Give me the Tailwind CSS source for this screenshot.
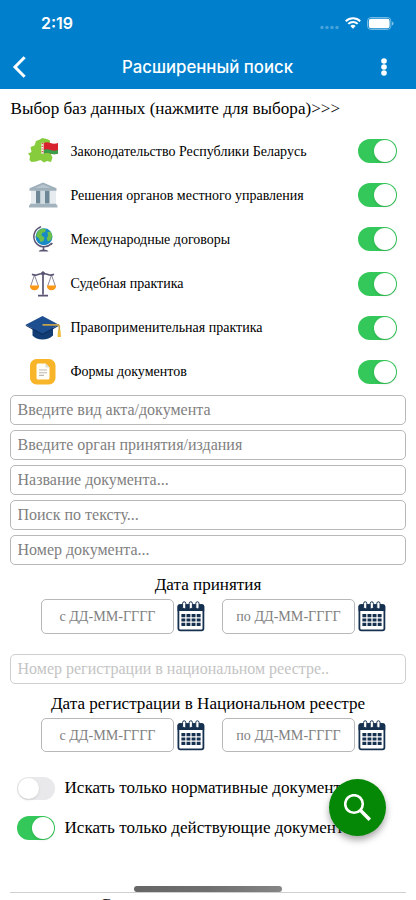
<!DOCTYPE html>
<html lang="ru">
<head>
  <meta charset="UTF-8" />
  <meta name="viewport" content="width=device-width, initial-scale=1.0" />
  <title>Расширенный поиск</title>
  <script src="https://cdn.jsdelivr.net/npm/@tailwindcss/browser@4"></script>
</head>
<body class="bg-white">
  <!-- Общие иконки -->
  <svg class="hidden">
    <symbol id="calendar" viewBox="0 0 28 31">
      <rect x="1.4" y="4.2" width="25" height="25.2" rx="1.8" fill="#fff" stroke="#16304f" stroke-width="1.8" />
      <path d="M.5 10V5.5Q.5 3.3 2.7 3.3H25Q27.2 3.3 27.2 5.5V10z" fill="#16304f" />
      <g fill="#fff" stroke="#16304f" stroke-width="1">
        <rect x="5.6" y=".8" width="3.2" height="7" rx="1.6" />
        <rect x="12.2" y=".8" width="3.2" height="7" rx="1.6" />
        <rect x="18.8" y=".8" width="3.2" height="7" rx="1.6" />
      </g>
      <path d="M4.4 14.6h19.2M4.4 19h19.2M4.4 23.4h19.2" stroke="#16304f" stroke-width="3.2" stroke-dasharray="3.9 1.2" />
    </symbol>
  </svg>

  <div class="relative w-[416px] h-[900px] overflow-hidden flex flex-col bg-white text-black font-['Liberation_Serif',serif]">

    <!-- Шапка -->
    <header class="h-[89px] shrink-0 bg-[#0080cc] text-white font-[Inter,sans-serif]">
      <div class="h-[46px] pl-[41px] pr-[22px] flex items-center justify-between">
        <span class="text-[16px] font-semibold leading-none">2:19</span>
        <div class="flex items-center">
          <svg class="w-[19px] h-[5px] mt-[8px]" viewBox="0 0 19 5" fill="#fff" fill-opacity=".28">
            <circle cx="2" cy="2.5" r="1.7" /><circle cx="7" cy="2.5" r="1.7" /><circle cx="12" cy="2.5" r="1.7" /><circle cx="17" cy="2.5" r="1.7" />
          </svg>
          <svg class="w-[16px] h-[12px] ml-[6px]" viewBox="0 0 16 12" fill="none" stroke="#fff" stroke-width="2">
            <path d="M.8 4.2a10.3 10.3 0 0 1 14.4 0M3.3 6.9a6.7 6.7 0 0 1 9.4 0" />
            <path d="M8 11.7 5.4 9.1a3.7 3.7 0 0 1 5.2 0z" fill="#fff" stroke="none" />
          </svg>
          <svg class="w-[27px] h-[13px] ml-[6px]" viewBox="0 0 27 13">
            <rect x=".5" y=".5" width="23.4" height="12" rx="3.6" fill="none" stroke="#fff" stroke-opacity=".45" />
            <rect x="1.8" y="1.8" width="20.8" height="9.4" rx="2.3" fill="#fff" />
            <path d="M25 4.5q1.6.6 1.6 2t-1.6 2z" fill="#fff" fill-opacity=".5" />
          </svg>
        </div>
      </div>
      <div class="h-[41px] pl-[12px] pr-[28px] flex items-center justify-between">
        <svg class="w-[14px] h-[22px]" viewBox="0 0 14 22" fill="none" stroke="#fff" stroke-width="3">
          <path d="M12.6 1.2 3 11l9.6 9.8" />
        </svg>
        <h1 class="ml-[9px] mt-px text-[16.8px] font-medium leading-none whitespace-nowrap">Расширенный поиск</h1>
        <svg class="w-[8px] h-[18px]" viewBox="0 0 8 18" fill="#fff">
          <circle cx="4" cy="3" r="2.8" /><circle cx="4" cy="9" r="2.8" /><circle cx="4" cy="15" r="2.8" />
        </svg>
      </div>
    </header>

    <h2 class="h-[40px] shrink-0 pl-[10.5px] flex items-center text-[17.1px] whitespace-nowrap">Выбор баз данных (нажмите для выбора)&gt;&gt;&gt;</h2>

    <!-- Базы данных -->
    <ul class="h-[265px] shrink-0 pl-[25px] pr-[19px] grid grid-rows-6 text-[14px]">
      <li class="flex items-center">
        <svg class="w-[36px] h-[30px]" viewBox="0 0 36 30">
          <path d="M3 17.5 6.5 16 5.5 11l4-1.5L11 5l4-1.5L17 2l5 1 3 1.5v4l3.5 4.500L28 16l-2 2.500 1.500 3L26 26l-4-1-3 1.500L15.500 24 11 25.500 6.500 26l-2-2 .5-4z" fill="#86cc3d" />
          <path d="M18.500 7q3.500-1.500 7 0t7.500 0v10.500q-4 1.500-7.500 0t-7 0z" fill="#d8232f" />
          <path d="M18.500 14q3.500-1.500 7 0t7.500 0v3.500q-4 1.500-7.500 0t-7 0z" fill="#36a04a" />
          <path d="M17.500 6.800v11" stroke="#fff" stroke-width="2.200" />
          <path d="M17.500 7v11" stroke="#e0503f" stroke-width="1.600" stroke-dasharray="1.200 1.500" />
        </svg>
        <span class="ml-[9.5px] whitespace-nowrap">Законодательство Республики Беларусь</span>
        <span class="ml-auto w-[39px] h-[24px] rounded-full bg-[#34c759] flex items-center justify-end pr-[1px]"><span class="size-[22px] rounded-full bg-white shadow"></span></span>
      </li>
      <li class="flex items-center">
        <svg class="w-[36px] h-[30px]" viewBox="0 0 36 30">
          <rect x="6" y="10" width="25" height="14.500" fill="#e5ebef" />
          <path d="M11 10.500h4.500v13H11zM20 10.500h4.500v13H20z" fill="#6d8796" />
          <path d="M15.500 10.500h4.500v13h-4.500z" fill="#d0dbe2" />
          <path d="M18 2.500 31.500 8.200v2.600h-27V8.200z" fill="#9fb0bb" />
          <path d="M18 4.500 26 8H10z" fill="#b8c5ce" />
          <path d="M5 23.800h26.500v1.400h1v2.300H4v-2.300h1z" fill="#a3b3be" />
        </svg>
        <span class="ml-[9.5px] whitespace-nowrap">Решения органов местного управления</span>
        <span class="ml-auto w-[39px] h-[24px] rounded-full bg-[#34c759] flex items-center justify-end pr-[1px]"><span class="size-[22px] rounded-full bg-white shadow"></span></span>
      </li>
      <li class="flex items-center">
        <svg class="w-[36px] h-[30px]" viewBox="0 0 36 30">
          <circle cx="19" cy="12.700" r="8.500" fill="#1689c6" />
          <path d="M12 9q2-4 6-4.500l3 1-1 2.500-3 1-.5 2.500 3 2-1 3.500-3 1-1.500-3.500L11 12zM22.500 8l3-.5 1.800 4-1 4-3.300 2-1.300-3 1.300-2.500z" fill="#6cc04a" />
          <path d="M14.700 3.400A10.200 10.200 0 1 0 26.200 19.900" fill="none" stroke="#5b5573" stroke-width="1.500" />
          <path d="M13.800 3.900 16 2.600M25.600 20.700 27.400 19M18.500 23v3.500" stroke="#5b5573" stroke-width="1.600" />
          <path d="M13.500 27.500q1-2 5-2t5 2z" fill="#5b5573" />
        </svg>
        <span class="ml-[9.5px] whitespace-nowrap">Международные договоры</span>
        <span class="ml-auto w-[39px] h-[24px] rounded-full bg-[#34c759] flex items-center justify-end pr-[1px]"><span class="size-[22px] rounded-full bg-white shadow"></span></span>
      </li>
      <li class="flex items-center">
        <svg class="w-[36px] h-[30px]" viewBox="0 0 36 30" fill="none" stroke="#5b5573">
          <path d="M9.500 6 5.500 17.500M9.500 6l4 11.500M26.500 6l-4 11.500M26.500 6l4 11.500" stroke-width=".7" />
          <path d="M7 5.200q3 1.600 6 .3t5-.5q2-.8 5 .5t6-.3" stroke-width="1.600" />
          <path d="M18 3v22.500M13 26.600h10" stroke-width="1.700" />
          <circle cx="18" cy="4.300" r="1.500" fill="#5b5573" />
          <path d="M4.800 16.500h9.400q-.5 4.800-4.700 4.800T4.800 16.500zM21.800 16.500h9.400q-.5 4.800-4.700 4.800T21.800 16.500z" fill="#fb9817" stroke="none" />
        </svg>
        <span class="ml-[9.5px] whitespace-nowrap">Судебная практика</span>
        <span class="ml-auto w-[39px] h-[24px] rounded-full bg-[#34c759] flex items-center justify-end pr-[1px]"><span class="size-[22px] rounded-full bg-white shadow"></span></span>
      </li>
      <li class="flex items-center">
        <svg class="w-[36px] h-[30px]" viewBox="0 0 36 30">
          <path d="M7.500 13v9.500q3.500 4 10 4t10.500-4V13z" fill="#123c74" />
          <path d="M17.500 3 34 11.700 17.500 20.800.7 11.700z" fill="#1d4f90" />
          <path d="M.7 11.700 17.500 20.800 34 11.700v1L17.500 22.200.7 12.700z" fill="#0e3162" />
          <path d="M17.500 11.900h15.300q1.500 0 1.500 1.500V17" fill="none" stroke="#c5a14a" stroke-width="1.600" />
          <path d="M33 17h2.500l.5 7h-3.500z" fill="#edbd3d" />
        </svg>
        <span class="ml-[9.5px] whitespace-nowrap">Правоприменительная практика</span>
        <span class="ml-auto w-[39px] h-[24px] rounded-full bg-[#34c759] flex items-center justify-end pr-[1px]"><span class="size-[22px] rounded-full bg-white shadow"></span></span>
      </li>
      <li class="flex items-center">
        <svg class="w-[36px] h-[30px]" viewBox="0 0 36 30">
          <rect x="5" y="2" width="25.500" height="25.500" rx="6.500" fill="#f8b529" />
          <path d="M13 6.500h7.500l4 4V21q0 1.500-1.500 1.500H13q-1.500 0-1.500-1.500V8q0-1.500 1.500-1.500z" fill="#fffdf5" />
          <path d="M20.500 6.500v2.800q0 1.200 1.200 1.200h2.800z" fill="#dcdcd6" />
          <path d="M14 13h8M14 15.700h8M14 18.400h5" stroke="#b9b9b5" stroke-width="1.100" />
        </svg>
        <span class="ml-[9.5px] whitespace-nowrap">Формы документов</span>
        <span class="ml-auto w-[39px] h-[24px] rounded-full bg-[#34c759] flex items-center justify-end pr-[1px]"><span class="size-[22px] rounded-full bg-white shadow"></span></span>
      </li>
    </ul>

    <!-- Поля поиска -->
    <div class="px-[10px] mt-px shrink-0 flex flex-col gap-[5px] text-[16px]">
      <input type="text" class="w-full h-[30px] px-[6.5px] rounded-[5px] border border-[#b8b8b8] placeholder:text-[#7f7f7f]" placeholder="Введите вид акта/документа" />
      <input type="text" class="w-full h-[30px] px-[6.5px] rounded-[5px] border border-[#b8b8b8] placeholder:text-[#7f7f7f]" placeholder="Введите орган принятия/издания" />
      <input type="text" class="w-full h-[30px] px-[6.5px] rounded-[5px] border border-[#b8b8b8] placeholder:text-[#7f7f7f]" placeholder="Название документа..." />
      <input type="text" class="w-full h-[30px] px-[6.5px] rounded-[5px] border border-[#b8b8b8] placeholder:text-[#7f7f7f]" placeholder="Поиск по тексту..." />
      <input type="text" class="w-full h-[30px] px-[6.5px] rounded-[5px] border border-[#b8b8b8] placeholder:text-[#7f7f7f]" placeholder="Номер документа..." />
    </div>

    <!-- Дата принятия -->
    <h3 class="mt-[6px] h-[28px] shrink-0 flex items-center justify-center text-[17.1px] leading-none whitespace-nowrap">Дата принятия</h3>
    <div class="h-[35px] shrink-0 pl-[41px] flex items-center text-[14.1px]">
      <input type="text" class="w-[133px] h-[35px] text-center rounded-[5px] border border-[#b8b8b8] placeholder:text-[#7f7f7f]" placeholder="с ДД-ММ-ГГГГ" />
      <svg class="w-[28px] h-[31px] ml-[3px]"><use href="#calendar" /></svg>
      <input type="text" class="ml-[17px] w-[133px] h-[35px] text-center rounded-[5px] border border-[#b8b8b8] placeholder:text-[#7f7f7f]" placeholder="по ДД-ММ-ГГГГ" />
      <svg class="w-[28px] h-[31px] ml-[3px]"><use href="#calendar" /></svg>
    </div>

    <div class="px-[10px] mt-[20px] shrink-0 text-[16px]">
      <input type="text" class="block w-full h-[30px] px-[6.5px] rounded-[5px] border border-[#cfcfcf] placeholder:text-[#c4c4c4]" placeholder="Номер регистрации в национальном реестре.." />
    </div>

    <!-- Дата регистрации -->
    <h3 class="mt-[6px] h-[28px] shrink-0 flex items-center justify-center text-[17.1px] leading-none whitespace-nowrap">Дата регистрации в Национальном реестре</h3>
    <div class="h-[34px] shrink-0 pl-[41px] flex items-center text-[14.1px]">
      <input type="text" class="w-[133px] h-[34px] text-center rounded-[5px] border border-[#b8b8b8] placeholder:text-[#7f7f7f]" placeholder="с ДД-ММ-ГГГГ" />
      <svg class="w-[28px] h-[31px] ml-[3px]"><use href="#calendar" /></svg>
      <input type="text" class="ml-[17px] w-[133px] h-[34px] text-center rounded-[5px] border border-[#b8b8b8] placeholder:text-[#7f7f7f]" placeholder="по ДД-ММ-ГГГГ" />
      <svg class="w-[28px] h-[31px] ml-[3px]"><use href="#calendar" /></svg>
    </div>

    <!-- Фильтры -->
    <div class="mt-[16px] shrink-0 pl-[17px] text-[17.1px]">
      <label class="h-[40px] flex items-center whitespace-nowrap">
        <span class="mr-[9.5px] w-[38px] h-[23px] rounded-full bg-[#e9e9eb] flex items-center pl-px"><span class="size-[21px] rounded-full bg-white shadow"></span></span>
        Искать только нормативные документы
      </label>
      <label class="h-[40px] flex items-center whitespace-nowrap">
        <span class="mr-[9.5px] w-[38px] h-[24px] rounded-full bg-[#34c759] flex items-center justify-end pr-px"><span class="size-[22px] rounded-full bg-white shadow"></span></span>
        Искать только действующие документы
      </label>
    </div>

    <div class="mx-[10px] mt-[44px] h-[40px] shrink-0 border-t border-[#d0d0d0] pt-[2px] pl-[90px] text-[17.1px] leading-[20px] whitespace-nowrap">Сортировать по</div>

    <!-- Кнопка поиска -->
    <button class="absolute left-[329px] top-[779px] size-[57px] rounded-full bg-[#058805] shadow-[0_4px_7px_rgba(0,0,0,0.35)] flex items-center justify-center">
      <svg class="w-[28px] h-[28px]" viewBox="0 0 28 28" fill="none" stroke="#fff">
        <circle cx="10" cy="10" r="8.8" stroke-width="2.6" />
        <path d="m16.600 16.600 9.200 9.200" stroke-width="3.500" />
      </svg>
    </button>

    <!-- Индикатор «Домой» -->
    <div class="absolute left-[134px] top-[886px] w-[148px] h-[6px] rounded-full bg-linear-to-r from-[#666] via-[#6f6f6f] to-[#858585]"></div>
  </div>
</body>
</html>
